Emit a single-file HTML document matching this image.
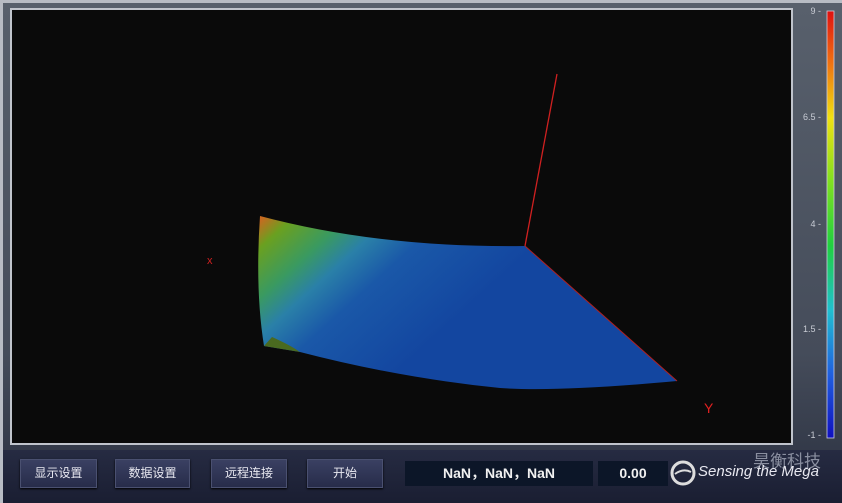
<!DOCTYPE html>
<html><head><meta charset="utf-8"><style>
body{margin:0;width:842px;height:503px;overflow:hidden;background:#4a5260;font-family:"Liberation Sans","Noto Sans CJK SC",sans-serif;}
.frame{position:absolute;left:0;top:0;width:842px;height:503px;background:linear-gradient(180deg,#58606c,#454c5a 70%,#2a3040);border-top:3px solid #b8bcc4;border-left:3px solid #b8bcc4;box-sizing:border-box}
.plot{position:absolute;left:10px;top:8px;width:783px;height:437px;background:#0a0a0a;border:2px solid #c0c4cc;box-sizing:border-box}
.bar{position:absolute;left:3px;top:450px;width:839px;height:53px;background:linear-gradient(180deg,#262b42,#1a1e32)}
.btn{position:absolute;top:459px;height:29px;background:linear-gradient(180deg,#3a4062,#272c4a);border:1px solid #4a5070;box-sizing:border-box;color:#e8e8f0;font-size:12px;line-height:27px;text-align:center;box-shadow:0 1px 2px #000}
.box{position:absolute;top:461px;height:25px;background:#0c1628;color:#f0f0f0;font-size:14px;line-height:25px;text-align:center;font-weight:bold}
.cl{position:absolute;right:21px;color:#c8ccd4;font-size:9px}
</style></head><body>
<div class="frame"></div>
<div class="plot"></div>
<svg style="position:absolute;left:0;top:0" width="842" height="503">
<defs>
<linearGradient id="g" gradientUnits="userSpaceOnUse" x1="262" y1="218" x2="400" y2="370">
<stop offset="0" stop-color="#c86a20"/><stop offset="0.1" stop-color="#6aa020"/><stop offset="0.28" stop-color="#3a9a60"/><stop offset="0.42" stop-color="#2a80a8"/><stop offset="0.6" stop-color="#1a58a8"/><stop offset="1" stop-color="#1346a0"/></linearGradient>
<linearGradient id="cb" x1="0" y1="0" x2="0" y2="1">
<stop offset="0" stop-color="#e01010"/><stop offset="0.12" stop-color="#f07010"/><stop offset="0.25" stop-color="#f0e010"/><stop offset="0.4" stop-color="#80e020"/><stop offset="0.55" stop-color="#20d040"/><stop offset="0.7" stop-color="#20c0d0"/><stop offset="0.85" stop-color="#2060e0"/><stop offset="1" stop-color="#1010c0"/></linearGradient>
</defs>
<line x1="525" y1="246" x2="557" y2="74" stroke="#d02020" stroke-width="1.3"/>
<path d="M260,216 Q380,248 525,246 L677,381 Q560,392 500,388 Q400,378 300,352 L264,346 Q255,290 260,216Z" fill="url(#g)"/>
<path d="M264,346 L272,337 Q290,345 300,352Z" fill="#4a6a20"/>
<line x1="525" y1="246" x2="677" y2="381" stroke="#b02020" stroke-width="1"/>
<text x="207" y="264" fill="#d02020" font-size="11" font-family="Liberation Sans">x</text>
<text x="704" y="413" fill="#e02020" font-size="14" font-family="Liberation Sans">Y</text>
<rect x="827" y="11" width="7" height="427" fill="url(#cb)" stroke="#ccd" stroke-width="0.8"/>
</svg>
<div class="cl" style="top:6px">9 -</div>
<div class="cl" style="top:112px">6.5 -</div>
<div class="cl" style="top:219px">4 -</div>
<div class="cl" style="top:324px">1.5 -</div>
<div class="cl" style="top:430px">-1 -</div>
<div class="bar"></div>
<div class="btn" style="left:20px;width:77px">显示设置</div>
<div class="btn" style="left:115px;width:75px">数据设置</div>
<div class="btn" style="left:211px;width:76px">远程连接</div>
<div class="btn" style="left:307px;width:76px">开始</div>
<div class="box" style="left:405px;width:188px">NaN，NaN，NaN</div>
<div class="box" style="left:598px;width:70px">0.00</div>
<div style="position:absolute;left:753px;top:447px;color:#8a8fa0;font-size:17px">昊衡科技</div>
<svg style="position:absolute;left:670px;top:460px" width="26" height="26"><circle cx="13" cy="13" r="11" fill="none" stroke="#ddd" stroke-width="3"/><path d="M5,14 Q13,8 21,12" stroke="#ddd" stroke-width="2" fill="none"/></svg>
<div style="position:absolute;left:698px;top:463px;color:#e8e8f0;font-size:15px;font-style:italic">Sensing the Mega</div>
</body></html>
